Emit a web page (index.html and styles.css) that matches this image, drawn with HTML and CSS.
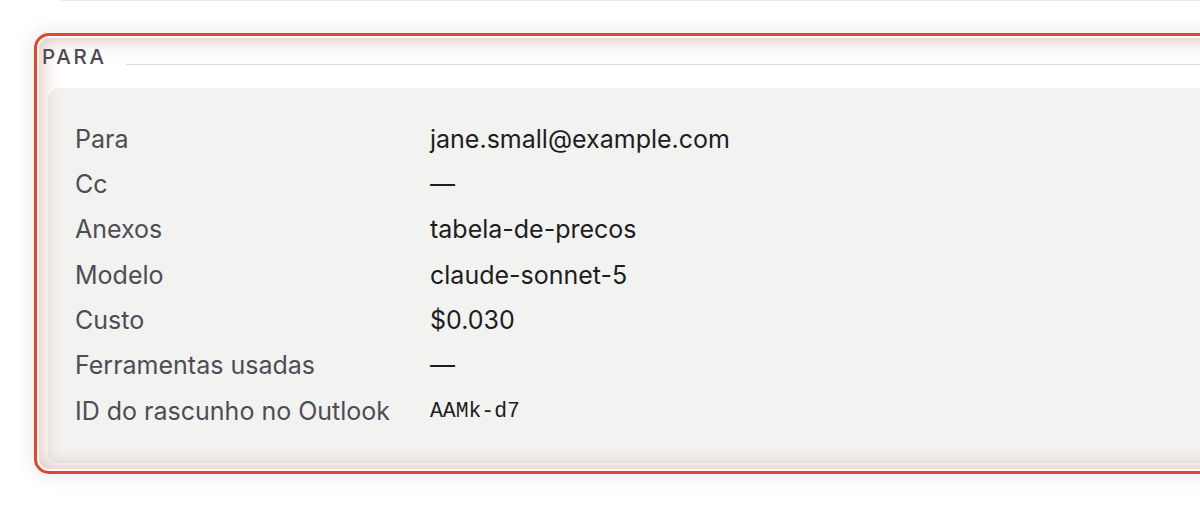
FILE: index.html
```html
<!DOCTYPE html>
<html lang="pt">
<head>
<meta charset="utf-8">
<title>Para</title>
<link rel="stylesheet" href="styles.css">
</head>
<body>
<div class="prev-divider"></div>
<section class="card is-highlighted">
  <h3 class="card-title"><span>PARA</span></h3>
  <dl class="meta">
    <dt>Para</dt><dd>jane.small@example.com</dd>
    <dt>Cc</dt><dd>—</dd>
    <dt>Anexos</dt><dd>tabela-de-precos</dd>
    <dt>Modelo</dt><dd>claude-sonnet-5</dd>
    <dt>Custo</dt><dd>$0.030</dd>
    <dt>Ferramentas usadas</dt><dd>—</dd>
    <dt>ID do rascunho no Outlook</dt><dd class="mono">AAMk-d7</dd>
  </dl>
</section>
</body>
</html>
```
FILE: styles.css
```css
html, body {
  margin: 0;
  padding: 0;
  background: #ffffff;
  overflow: hidden;
}
body {
  font-family: Inter, "Noto Sans", sans-serif;
  width: 1200px;
  height: 506px;
}
.prev-divider {
  margin-left: 60px;
  height: 1px;
  background: #ececec;
}
.card {
  position: relative;
  margin: 37px 0 0 39px;
  width: 1240px;
  padding: 7px 0 6px 0;
  border-radius: 10px;
  background: #ffffff;
}
.card.is-highlighted::after {
  content: "";
  position: absolute;
  inset: 0;
  border-radius: 10px;
  pointer-events: none;
  outline: 3px solid #e0472b;
  outline-offset: 2px;
  box-shadow:
    inset 0 0 18px 3px rgba(150, 80, 70, 0.32),
    0 0 0 2px #fff8f2,
    0 0 18px 8px rgba(60, 60, 80, 0.10);
}
.card-title {
  display: flex;
  align-items: flex-end;
  margin: 0;
  padding-left: 3px;
  font-size: 20.5px;
  font-weight: 500;
  line-height: 24px;
  letter-spacing: 0.13em;
  color: #4a4a55;
}
.card-title::after {
  content: "";
  flex: 1;
  margin-left: 19px;
  margin-bottom: 4px;
  border-bottom: 1px solid #dcdcdc;
}
.meta {
  display: grid;
  grid-template-columns: 355px 1fr;
  grid-auto-rows: 45.33px;
  align-items: center;
  margin: 19px 0 0 9px;
  padding: 28px 27px 30px 27px;
  background: #f2f2f0;
  border-radius: 10px;
  font-size: 25px;
  line-height: 32px;
}
.meta dt {
  margin: 0;
  color: #4d4d56;
}
.meta dd {
  margin: 0;
  color: #1d1d22;
}
.meta dd.mono {
  font-family: "Liberation Mono", monospace;
  font-size: 21.4px;
}
```
